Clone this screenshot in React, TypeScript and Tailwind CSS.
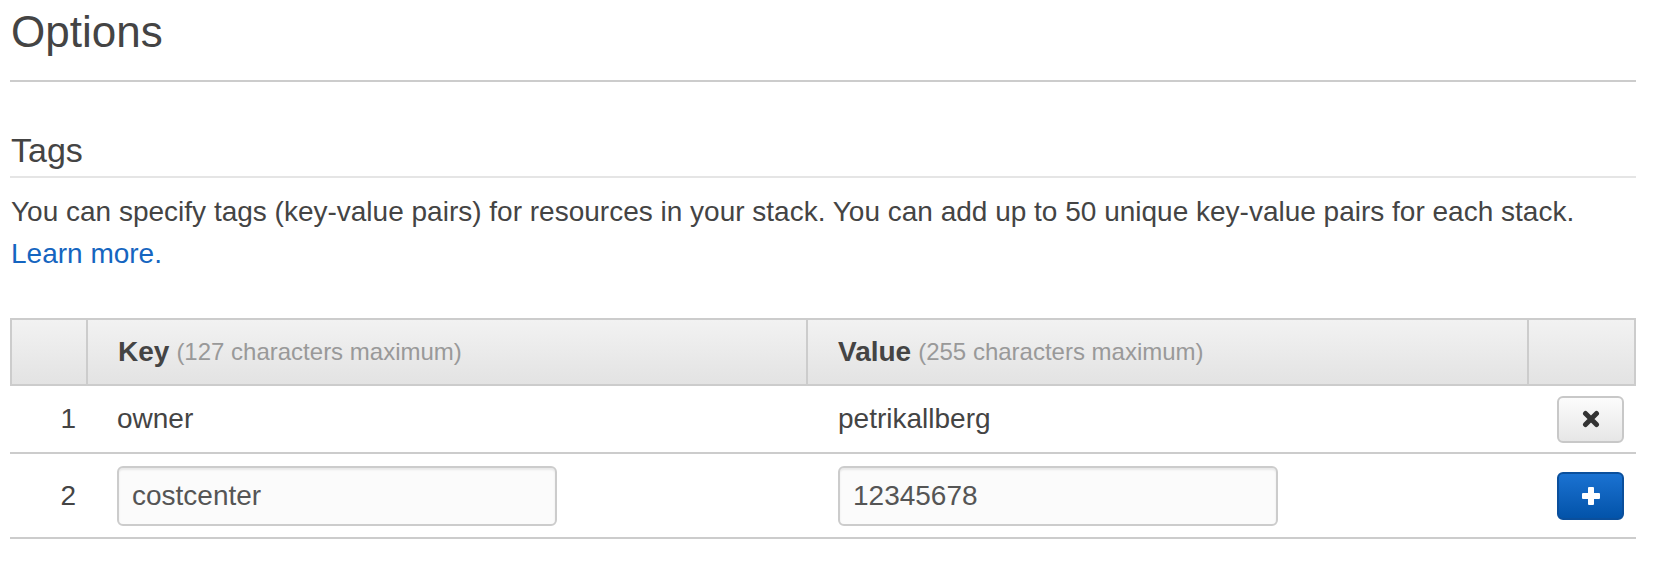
import React from "react";

function TimesIcon() {
  return (
    <svg width="18" height="18" viewBox="0 0 18 18" fill="none">
      <path d="M3.5 3.5 L14.5 14.5 M14.5 3.5 L3.5 14.5" stroke="#333" strokeWidth="5" strokeLinecap="round" />
    </svg>
  );
}

function PlusIcon() {
  return (
    <svg width="20" height="20" viewBox="0 0 20 20" fill="#fff">
      <rect x="7" y="1" width="6" height="18" rx="1" />
      <rect x="1" y="7" width="18" height="6" rx="1" />
    </svg>
  );
}

const rows = [
  { n: 1, key: "owner", value: "petrikallberg", editable: false },
  { n: 2, key: "costcenter", value: "12345678", editable: true },
];

export default function App() {
  return (
    <div
      className="min-h-screen bg-white pl-[10px] pr-[28px] pt-[10px] text-[#444]"
      style={{ fontFamily: '"Liberation Sans", Arial, Helvetica, sans-serif' }}
    >
      {/* Options heading */}
      <div className="border-b-2 border-[#ccc] pb-[26px]">
        <h1 className="pl-[1px] text-[44px] font-normal leading-[44px]">Options</h1>
      </div>

      {/* Tags section */}
      <div className="mt-[51px] border-b-2 border-[#e5e5e5] pb-[9px]">
        <h2 className="pl-[1px] text-[34px] font-normal leading-[34px]">Tags</h2>
      </div>
      <p className="mt-[13px] pl-[1px] text-[28px] leading-[42px]">
        You can specify tags (key-value pairs) for resources in your stack. You can add up to 50 unique key-value pairs for each stack.
        <br />
        <a href="#" className="text-[#1565c0]">
          Learn more.
        </a>
      </p>

      {/* Tags table */}
      <div className="mt-[43px] text-[28px]">
        <div className="grid h-[68px] grid-cols-[76px_720px_721px_1fr] border-2 border-[#ccc] bg-gradient-to-b from-[#f2f2f2] to-[#e3e3e3]">
          <div className="border-r-2 border-[#ccc]" />
          <div className="flex items-center border-r-2 border-[#ccc] pl-[30px]">
            <span className="font-bold">Key</span>
            <span className="ml-[7px] text-[24px] text-[#999]">(127 characters maximum)</span>
          </div>
          <div className="flex items-center border-r-2 border-[#ccc] pl-[30px]">
            <span className="font-bold">Value</span>
            <span className="ml-[7px] text-[24px] text-[#999]">(255 characters maximum)</span>
          </div>
          <div />
        </div>

        {rows.map((r) => (
          <div
            key={r.n}
            className={`grid grid-cols-[78px_720px_721px_1fr] border-b-2 border-[#ccc] ${r.editable ? "h-[85px]" : "h-[68px]"}`}
          >
            <div className="flex items-center justify-end pr-[12px]">{r.n}</div>
            <div className="flex items-center pl-[29px]">
              {r.editable ? (
                <input
                  defaultValue={r.key}
                  className="h-[60px] w-[440px] rounded-[6px] border-2 border-[#ccc] bg-[#fbfbfb] px-[13px] text-[28px] text-[#555] shadow-[inset_0_2px_2px_rgba(0,0,0,0.08)] outline-none"
                />
              ) : (
                <span>{r.key}</span>
              )}
            </div>
            <div className="flex items-center pl-[30px]">
              {r.editable ? (
                <input
                  defaultValue={r.value}
                  className="h-[60px] w-[440px] rounded-[6px] border-2 border-[#ccc] bg-[#fbfbfb] px-[13px] text-[28px] text-[#555] shadow-[inset_0_2px_2px_rgba(0,0,0,0.08)] outline-none"
                />
              ) : (
                <span>{r.value}</span>
              )}
            </div>
            <div className="flex items-center justify-end pr-[12px]">
              {r.editable ? (
                <button className="flex h-[48px] w-[67px] items-center justify-center rounded-[6px] border-2 border-[#0a4f9c] bg-gradient-to-b from-[#1a72d2] to-[#0353a9]">
                  <PlusIcon />
                </button>
              ) : (
                <button className="flex h-[47px] w-[67px] items-center justify-center rounded-[6px] border-2 border-[#c8c8c8] bg-gradient-to-b from-[#fcfcfc] to-[#e6e6e6]">
                  <TimesIcon />
                </button>
              )}
            </div>
          </div>
        ))}
      </div>
    </div>
  );
}
